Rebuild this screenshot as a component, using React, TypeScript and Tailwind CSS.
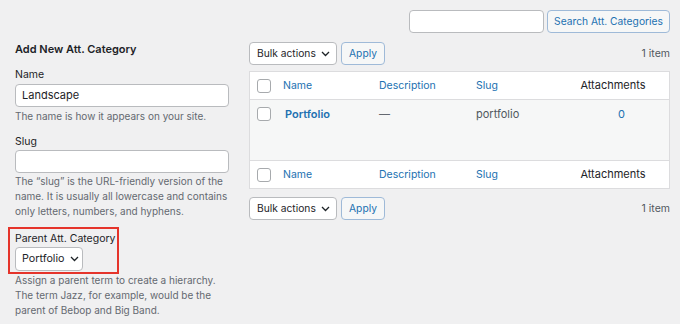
import React from 'react'

const font = { fontFamily: 'Inter, "Liberation Sans", sans-serif' }

function Chevron() {
  return (
    <svg width="9" height="6" viewBox="0 0 9 6" className="ml-[5px]">
      <path d="M1 1l3.5 3.5L8 1" fill="none" stroke="#1d2327" strokeWidth="1.3" />
    </svg>
  )
}

function Checkbox() {
  return <div className="w-[14px] h-[14px] rounded-[3px] border border-[#a7aaad] bg-white" />
}

function BulkRow() {
  return (
    <div className="flex items-center h-[23px]">
      <div className="h-[23px] w-[88px] flex items-center pl-[7px] bg-white border border-[#b9bbbe] rounded-[4px] text-[10.25px] text-[#1d2327] whitespace-nowrap">
        Bulk actions
        <Chevron />
      </div>
      <div className="ml-[4px] h-[23px] w-[44px] flex items-center justify-center bg-[#f6f7f7] border border-[#9fbad8] rounded-[4px] text-[10.25px] text-[#2271b1]">
        Apply
      </div>
      <div className="ml-auto text-[10.5px] text-[#50575e]">1 item</div>
    </div>
  )
}

function TableRow({ footer }: { footer?: boolean }) {
  return (
    <div
      className={`flex items-center h-[28px] bg-white text-[10.5px] ${
        footer ? 'border-t border-[#dcdcde]' : 'border-b border-[#dcdcde]'
      }`}
    >
      <div className="w-[25px] pl-[7px]">
        <Checkbox />
      </div>
      <div className="w-[96px] pl-[8px] text-[#2271b1]">Name</div>
      <div className="w-[97px] pl-[8px] text-[#2271b1]">Description</div>
      <div className="w-[89px] pl-[8px] text-[#2271b1]">Slug</div>
      <div className="flex-1 text-center text-[11px] text-[#1d2327]">Attachments</div>
    </div>
  )
}

export default function App() {
  return (
    <div className="w-[680px] h-[324px] bg-[#f0f0f1] overflow-hidden" style={font}>
      {/* Search */}
      <div className="flex justify-end pt-[10px] pr-[10px] gap-[3px]">
        <div className="w-[135px] h-[23px] bg-white border border-[#b9bbbe] rounded-[4px]" />
        <div className="w-[123px] h-[23px] flex items-center justify-center bg-[#f6f7f7] border border-[#9fbad8] rounded-[4px] text-[10.25px] text-[#2271b1] whitespace-nowrap">
          Search Att. Categories
        </div>
      </div>

      <div className="flex mt-[9px]">
        {/* Left form */}
        <div className="w-[249px] pl-[15px] pr-[20px] text-[10.5px] text-[#1d2327]">
          <h2 className="text-[11px] font-semibold leading-[14px]">Add New Att. Category</h2>
          <div className="mt-[11px] leading-[16px]">Name</div>
          <div className="mt-[1px] h-[23px] bg-white border border-[#b9bbbe] rounded-[4px] flex items-center pl-[6px] text-[11px]">
            Landscape
          </div>
          <div className="mt-[2px] text-[10px] text-[#646970] leading-[15px]">The name is how it appears on your site.</div>
          <div className="mt-[10px] leading-[16px]">Slug</div>
          <div className="h-[23px] bg-white border border-[#b9bbbe] rounded-[4px]" />
          <div className="mt-[1px] text-[10px] text-[#646970] leading-[15px]">
            The “slug” is the URL-friendly version of the name. It is usually all lowercase and contains only letters, numbers, and hyphens.
          </div>
          <div className="mt-[8px] -ml-[7px] w-[111px] h-[47px] border-2 border-[#e5342b] pl-[5px] pt-[2px]">
            <div className="leading-[16px] whitespace-nowrap">Parent Att. Category</div>
            <div className="h-[24px] w-[68px] bg-white border border-[#b9bbbe] rounded-[4px] flex items-center pl-[6px] text-[10.75px]">
              Portfolio
              <Chevron />
            </div>
          </div>
          <div className="-mt-[1px] text-[10px] text-[#646970] leading-[15px]">
            Assign a parent term to create a hierarchy. The term Jazz, for example, would be the parent of Bebop and Big Band.
          </div>
        </div>

        {/* Right list */}
        <div className="w-[421px]">
          <BulkRow />
          <div className="mt-[6px] border border-[#dcdcde]">
            <TableRow />
            <div className="flex items-start h-[60px] bg-[#f6f7f7] text-[11px] pt-[6px]">
              <div className="w-[25px] pl-[7px] pt-[1px]">
                <Checkbox />
              </div>
              <div className="w-[96px] pl-[10px] font-semibold text-[#2271b1]">Portfolio</div>
              <div className="w-[97px] pl-[8px] text-[#646970]">—</div>
              <div className="w-[89px] pl-[8px] text-[#50575e]">portfolio</div>
              <div className="flex-1 text-center pl-[17px] text-[#2271b1]">0</div>
            </div>
            <TableRow footer />
          </div>
          <div className="mt-[8px]">
            <BulkRow />
          </div>
        </div>
      </div>
    </div>
  )
}
